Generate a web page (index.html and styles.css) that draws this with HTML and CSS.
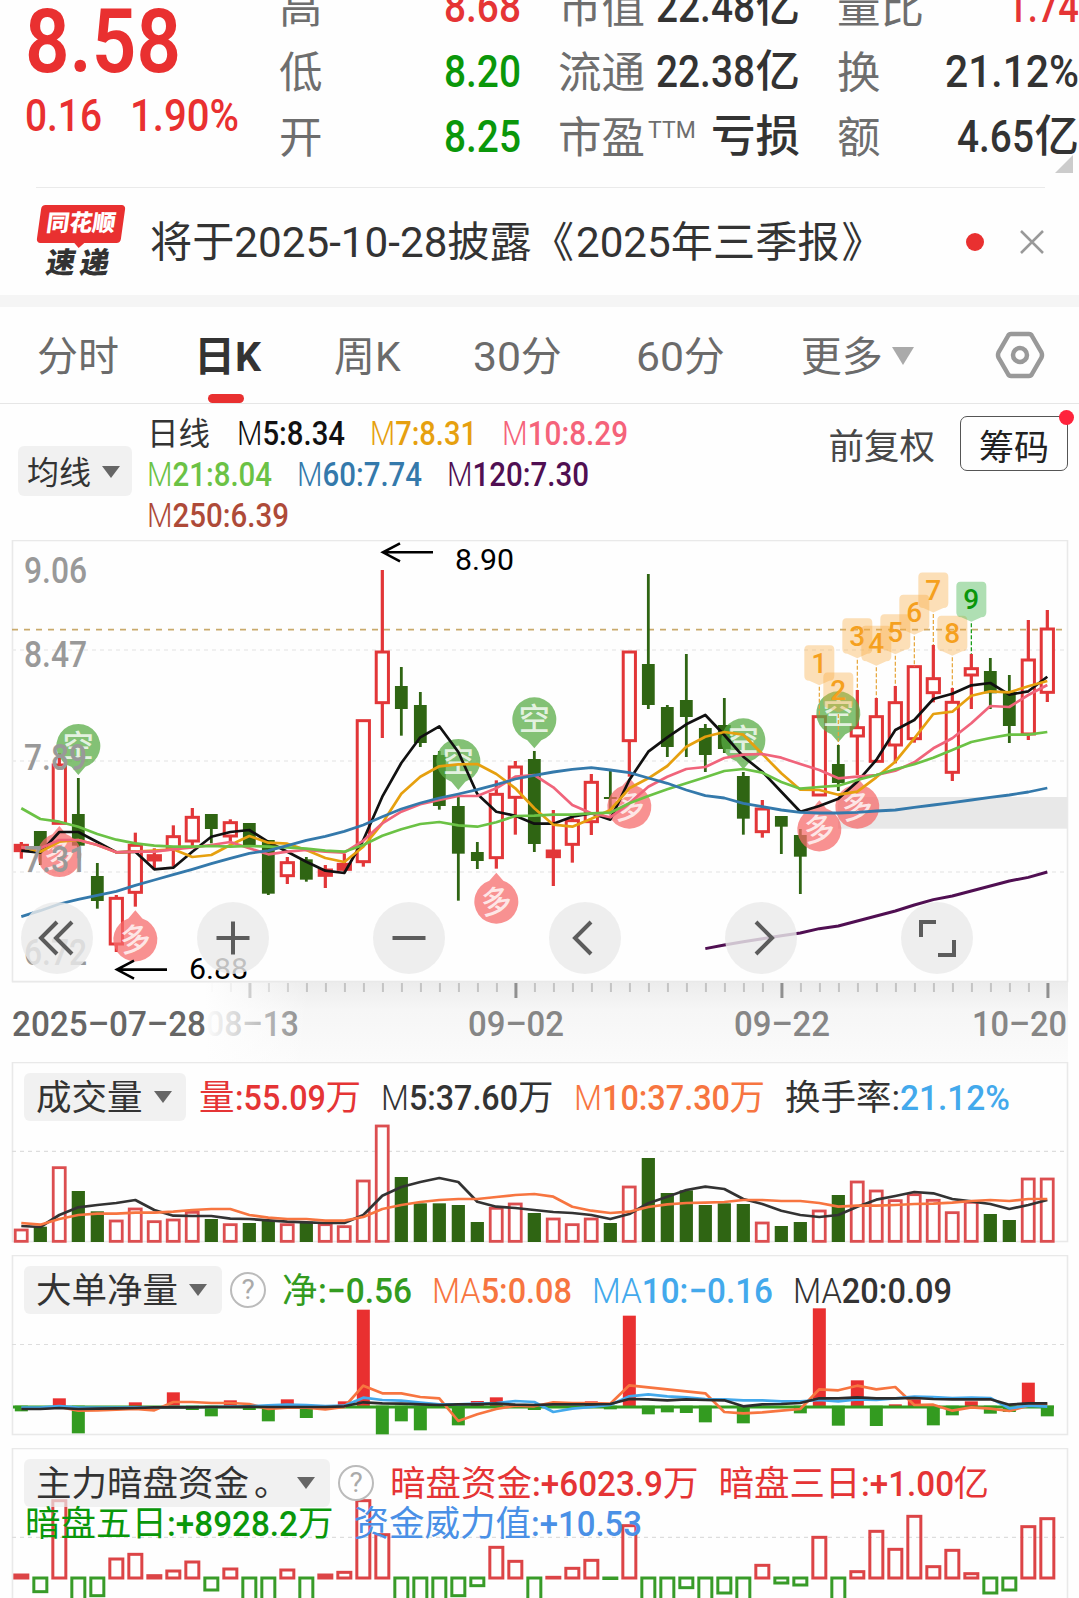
FILE: index.html
```
<!DOCTYPE html>
<html lang="zh-CN">

<head>
    <meta charset="UTF-8" />
    <meta name="viewport" content="width=device-width, initial-scale=1.0" />
    <title>日K</title>
    <link rel="stylesheet" href="styles.css">
</head>

<body>
    <header class="quote">
        <div class="price-box">
            <div class="price"><span class="fit" data-w="156">8.58</span></div>
            <div class="change">
                <span class="fit" data-w="77">0.16</span>
                <span class="fit" data-w="109">1.90%</span>
            </div>
        </div>
        <div class="stats">
            <div class="stat"><span class="name">高</span><b class="up"><span class="fit" data-w="77">8.68</span></b></div>
            <div class="stat"><span class="name">市值</span><b><span class="fit" data-w="99">22.48</span>亿</b></div>
            <div class="stat"><span class="name">量比</span><b class="up"><span class="fit" data-w="72">1.74</span></b></div>
            <div class="stat"><span class="name">低</span><b class="down"><span class="fit" data-w="77">8.20</span></b></div>
            <div class="stat"><span class="name">流通</span><b><span class="fit" data-w="99">22.38</span>亿</b></div>
            <div class="stat"><span class="name">换</span><b><span class="fit" data-w="134">21.12%</span></b></div>
            <div class="stat"><span class="name">开</span><b class="down"><span class="fit" data-w="77">8.25</span></b></div>
            <div class="stat"><span class="name">市盈<sup>TTM</sup></span><b>亏损</b></div>
            <div class="stat"><span class="name">额</span><b><span class="fit" data-w="77">4.65</span>亿</b></div>
        </div>
        <i class="corner"></i>
    </header>

    <section class="news">
        <div class="logo">
            <span class="logo-top">同花顺</span>
            <span class="logo-bottom">速递</span>
        </div>
        <p class="news-text">将于2025-10-28披露<span class="open">《</span>2025年三季报<span class="shut">》</span></p>
        <i class="dot"></i>
        <svg class="close" width="26" height="26" viewBox="0 0 26 26">
            <path d="M2 2L24 24M24 2L2 24" />
        </svg>
    </section>

    <nav class="tabs">
        <a>分时</a>
        <a class="active">日K</a>
        <a>周K</a>
        <a><span class="fit" data-w="48">30</span>分</a>
        <a><span class="fit" data-w="48">60</span>分</a>
        <a class="more">更多<i class="arrow"></i></a>
        <svg class="setting" width="50" height="50" viewBox="0 0 50 50">
            <path d="M16 4H34Q36 4 37 6L46.500 22.500Q47.500 25 46.500 27.500L37 44Q36 46 34 46H16Q14 46 13 44L3.500 27.500Q2.500 25 3.500 22.500L13 6Q14 4 16 4Z" />
            <circle cx="25" cy="25" r="7" />
        </svg>
    </nav>

    <section class="legend">
        <div class="pill small">均线<i class="arrow"></i></div>
        <div class="averages">
            <div class="line">
                <span class="cn">日线</span>
                <span class="fit black" data-w="108"><i>M</i>5:8.34</span>
                <span class="fit orange" data-w="107"><i>M</i>7:8.31</span>
                <span class="fit pink" data-w="126"><i>M</i>10:8.29</span>
            </div>
            <div class="line">
                <span class="fit green" data-w="125"><i>M</i>21:8.04</span>
                <span class="fit blue" data-w="125"><i>M</i>60:7.74</span>
                <span class="fit purple" data-w="142"><i>M</i>120:7.30</span>
            </div>
            <div class="line">
                <span class="fit brown" data-w="142"><i>M</i>250:6.39</span>
            </div>
        </div>
        <span class="adjust">前复权</span>
        <button class="chips">筹码<i class="badge"></i></button>
    </section>

    <section class="kline">
        <svg id="kline" width="1079" height="522" viewBox="0 0 1079 522"></svg>
        <div class="tools">
            <button><svg viewBox="0 0 72 72"><path d="M36 20L20 36L36 52M51 20L35 36L51 52" /></svg></button>
            <button><svg viewBox="0 0 72 72"><path d="M19.500 36H52.500M36 19.500V52.500" /></svg></button>
            <button><svg viewBox="0 0 72 72"><path d="M19.500 36H52.500" /></svg></button>
            <button><svg viewBox="0 0 72 72"><path d="M42 20L26 36L42 52" /></svg></button>
            <button><svg viewBox="0 0 72 72"><path d="M31 20L47 36L31 52" /></svg></button>
            <button><svg viewBox="0 0 72 72"><path d="M35 20H20V35M53 38V53H37" /></svg></button>
        </div>
    </section>

    <section class="panel volume">
        <svg id="volume" width="1079" height="181" viewBox="0 0 1079 181"></svg>
        <div class="head">
            <div class="pill">成交量<i class="arrow"></i></div>
            <span class="up">量<span class="fit" data-w="91">:55.09</span>万</span>
            <span class="dark"><span class="fit" data-w="137"><i>M</i>5:37.60</span>万</span>
            <span class="coral"><span class="fit" data-w="156"><i>M</i>10:37.30</span>万</span>
            <span class="dark">换手率:<span class="fit sky" data-w="110">21.12%</span></span>
        </div>
    </section>

    <section class="panel net">
        <svg id="net" width="1079" height="181" viewBox="0 0 1079 181"></svg>
        <div class="head">
            <div class="pill">大单净量<i class="arrow"></i></div>
            <i class="help">?</i>
            <span class="leaf">净<span class="fit" data-w="94">:−0.56</span></span>
            <span class="fit coral" data-w="140"><i>MA</i>5:0.08</span>
            <span class="fit sky" data-w="181"><i>MA</i>10:−0.16</span>
            <span class="fit dark" data-w="159"><i>MA</i>20:0.09</span>
        </div>
    </section>

    <section class="panel flow">
        <svg id="flow" width="1079" height="151" viewBox="0 0 1079 151"></svg>
        <div class="head">
            <div class="pill wide"><span>主力暗盘资金<span class="stop">。</span></span><i class="arrow"></i></div>
            <i class="help">?</i>
            <span class="up">暗盘资金<span class="fit" data-w="131">:+6023.9</span>万</span>
            <span class="up">暗盘三日<span class="fit" data-w="93">:+1.00</span>亿</span>
            <div class="second">
                <span class="down">暗盘五日<span class="fit" data-w="131">:+8928.2</span>万</span>
                <span class="azure">资金威力值<span class="fit" data-w="111">:+10.53</span></span>
            </div>
        </div>
    </section>

    <script src="chart.js"></script>
</body>

</html>
```
FILE: styles.css
```
* {
    box-sizing: border-box;
    margin: 0;
    padding: 0;
}

body {
    width: 1079px;
    height: 1598px;
    overflow: hidden;
    background: #fefefe;
    color: #333;
    font-family: Roboto, "Noto Sans CJK SC", sans-serif;
}

i {
    font-style: normal;
}

button {
    font-family: inherit;
    background: none;
    border: none;
}

svg {
    display: block;
}

.fit {
    display: inline-block;
    transform-origin: left center;
    white-space: nowrap;
}

.up { color: #e53435; }
.down { color: #0a970a; }
.dark { color: #333; }
.black { color: #111; }
.orange { color: #e6a00f; }
.pink { color: #f5637a; }
.green { color: #6bc245; }
.blue { color: #3479ab; }
.purple { color: #500f52; }
.brown { color: #ae4a38; }
.coral { color: #f77540; }
.sky { color: #43a9ec; }
.leaf { color: #339b20; }
.azure { color: #4a90e6; }

/* quote header */
.quote {
    position: relative;
    display: flex;
    height: 187px;
    overflow: hidden;
}

.price-box {
    width: 280px;
    padding-left: 25px;
    color: #e93030;
}

.price {
    margin-top: -3px;
    font-size: 89px;
    line-height: 89px;
    font-weight: 600;
}

.change {
    display: flex;
    gap: 28px;
    margin-top: 7px;
    font-size: 45px;
    line-height: 45px;
    font-weight: 500;
}

.stats {
    display: grid;
    grid-template-columns: 242px 242px 242px;
    grid-auto-rows: 65px;
    column-gap: 37px;
    margin-top: -25px;
}

.stat {
    display: flex;
    justify-content: space-between;
    font-size: 45px;
    line-height: 65px;
    white-space: nowrap;
}

.stat b {
    font-weight: 500;
    font-size: 44.500px;
}

.stat .name {
    font-size: 43.500px;
    line-height: 67px;
    color: #6e6e6e;
    font-weight: 400;
}

.stat sup {
    margin-left: 3px;
    font-size: 23px;
    font-weight: 400;
    line-height: 0;
    vertical-align: 15px;
}

.corner {
    position: absolute;
    right: 6px;
    bottom: 14px;
    border-left: 18px solid transparent;
    border-bottom: 18px solid #ccc;
}

/* news bar */
.news {
    display: flex;
    align-items: center;
    height: 108px;
    margin: 0 34px 0 36px;
    border-top: 1px solid #eaeaea;
}

.logo {
    display: flex;
    flex-direction: column;
    align-items: center;
    width: 90px;
    font-weight: 900;
}

.logo-top {
    position: relative;
    width: 84px;
    height: 38px;
    border-radius: 4px;
    background: #e93030;
    color: #fff;
    font-size: 23px;
    line-height: 37px;
    text-align: center;
    transform: skewX(-8deg);
}

.logo-top::after {
    content: "";
    position: absolute;
    left: 37px;
    top: 37px;
    border: 6px solid transparent;
    border-top-color: #e93030;
}

.logo-bottom {
    height: 35px;
    font-size: 29px;
    line-height: 40px;
    letter-spacing: 5px;
    transform: skewX(-10deg);
}

.news-text {
    margin-left: 24px;
    font-size: 42.200px;
    font-weight: 400;
    line-height: 60px;
    padding-top: 2px;
    white-space: nowrap;
}

.news-text .open {
    margin-right: 2px;
}

.news-text .shut {
    margin-left: 2px;
}

.dot {
    width: 18px;
    height: 18px;
    margin-left: auto;
    border-radius: 50%;
    background: #e93030;
}

.close {
    margin-left: 35px;
}

.close path {
    stroke: #999;
    stroke-width: 2.500;
}

/* period tabs */
.tabs {
    display: flex;
    align-items: center;
    height: 109px;
    padding: 0 34px 0 37px;
    border-top: 12px solid #f5f5f5;
    border-bottom: 1px solid #e6e6e6;
    font-size: 41px;
    color: #6b6b6b;
    line-height: 100px;
}

.tabs a {
    position: relative;
    height: 96px;
    margin-right: 74px;
    font-weight: 400;
    white-space: nowrap;
}

.tabs a:first-child {
    margin-right: 75px;
}

.tabs a:nth-child(3) {
    margin-right: 72px;
}

.tabs .active {
    margin-right: 73px;
    color: #333;
    font-weight: 700;
}

.tabs .active::after {
    content: "";
    position: absolute;
    left: 50%;
    bottom: 0;
    width: 36px;
    height: 9px;
    margin-left: -20px;
    border-radius: 5px;
    background: #e93030;
}

.tabs .more {
    display: flex;
    align-items: center;
    height: 100px;
    margin-left: 2px;
    margin-right: 0;
    padding-top: 4px;
}

.arrow {
    border: 9px solid transparent;
    border-top: 12px solid #666;
    border-bottom: none;
}

.more .arrow {
    margin: -2px 0 0 9px;
    border-width: 18px 11px 0;
    border-top-color: #aaa;
}

.setting {
    margin-left: auto;
}

.setting path,
.setting circle {
    fill: none;
    stroke: #999;
    stroke-width: 4.500;
}

/* averages legend */
.legend {
    display: flex;
    height: 136px;
    padding: 9px 11px 0 18px;
}

.pill {
    display: flex;
    align-items: center;
    justify-content: space-between;
    height: 48px;
    padding: 3px 15px 0 12px;
    border-radius: 6px;
    background: rgba(235, 235, 235, 0.7);
    color: #333;
    font-size: 35.500px;
    line-height: 51px;
    font-weight: 400;
    gap: 11px;
    white-space: nowrap;
}

.pill.small {
    width: 114px;
    height: 50px;
    margin-top: 33px;
    padding: 5px 12px 0 9px;
    font-size: 32px;
}

.pill .arrow {
    margin-top: -4px;
}

.pill .stop {
    margin-left: 5px;
}

.averages {
    margin-left: 15px;
    font-size: 33.500px;
    line-height: 41px;
    font-weight: 500;
}

.averages .line {
    display: flex;
    gap: 25px;
}

.averages .cn {
    font-size: 31.500px;
    line-height: 43px;
    height: 41px;
    font-weight: 400;
    margin: 0 2px 0 0;
}

.averages i,
.head span i {
    font-weight: 300;
}

.adjust {
    margin: 6px 25px 0 auto;
    font-size: 35.500px;
    line-height: 57px;
    font-weight: 400;
    color: #484848;
}

.chips {
    position: relative;
    width: 108px;
    height: 55px;
    margin-top: 3px;
    padding-top: 5px;
    border: 1px solid #555;
    border-radius: 7px;
    font-size: 35px;
    line-height: 54px;
    color: #222;
}

.badge {
    position: absolute;
    top: -7px;
    right: -7px;
    width: 15px;
    height: 15px;
    border-radius: 50%;
    background: #ff233c;
}

/* candle chart */
.kline {
    position: relative;
    height: 522px;
}

.tools {
    position: absolute;
    left: 21px;
    top: 362px;
    display: flex;
    gap: 104px;
}

.tools button {
    width: 72px;
    height: 72px;
    border-radius: 50%;
    background: rgba(234, 234, 234, 0.82);
}

.tools path {
    fill: none;
    stroke: #5c5c5c;
    stroke-width: 4;
}

/* indicator panels, header lies over the drawing */
.panel {
    display: grid;
    height: 193px;
}

.panel svg,
.panel .head {
    grid-area: 1 / 1;
}

.head {
    display: flex;
    flex-wrap: wrap;
    align-content: flex-start;
    z-index: 1;
    padding: 11px 12px 0 24px;
    font-size: 35.500px;
    line-height: 51px;
    font-weight: 400;
    white-space: nowrap;
    column-gap: 20px;
}

.head .fit {
    font-weight: 500;
}

.volume .pill {
    width: 162px;
    margin-right: -7px;
}

.net .pill {
    width: 198px;
    margin-right: -12px;
}

.pill.wide {
    width: 306px;
    margin-right: -12px;
    gap: 0;
}

.help {
    width: 36px;
    height: 36px;
    margin: 6px -4px 0 0;
    border: 2px solid #bbb;
    border-radius: 50%;
    color: #aaa;
    font-size: 28px;
    font-weight: 400;
    line-height: 32px;
    text-align: center;
}

.second {
    display: flex;
    gap: 20px;
    width: 100%;
    margin-top: -11px;
    padding-left: 1px;
}

/* svg texts */
.axis {
    fill: #999;
    font-size: 36px;
    font-weight: 500;
}

.date {
    fill: #868686;
    font-size: 35.500px;
    font-weight: 500;
}

.extreme {
    fill: #000;
    font-size: 30px;
}

.pin {
    fill: #fff;
    fill-opacity: 0.8;
    font-size: 31px;
    font-weight: 500;
    text-anchor: middle;
}

.tag {
    font-size: 28px;
    font-weight: 500;
    text-anchor: middle;
}
```
FILE: chart.js
```
// all heights below are in thirds of a pixel
const RED = '#e23638';
const GREEN = '#2f6513';
const X = i => 21.33 + 19 * i;

// squeeze numbers to their column width
document.querySelectorAll('.fit').forEach(el => {
    const natural = el.getBoundingClientRect().width;
    const w = Number(el.dataset.w);
    el.style.transform = `scaleX(${w / natural})`;
    el.style.marginRight = `${w - natural}px`;
});

function rect(x, y, w, h, attrs) {
    return `<rect x="${x.toFixed(2)}" y="${y.toFixed(2)}" width="${w}" height="${Math.max(h, 0.5).toFixed(2)}" ${attrs}/>`;
}

function line(x1, y1, x2, y2, color, width, dash) {
    return `<line x1="${x1}" y1="${y1}" x2="${x2}" y2="${y2}" stroke="${color}" stroke-width="${width}"${dash ? ` stroke-dasharray="${dash}"` : ''}/>`;
}

function curve(values, y, color, width, start = 0) {
    const pts = values.map((v, i) => `${X(i + start).toFixed(1)},${y(v).toFixed(1)}`).join(' ');
    return `<polyline points="${pts}" fill="none" stroke="${color}" stroke-width="${width}" stroke-linejoin="round"/>`;
}

function frame(h) {
    return rect(12.5, 0.5, 1055, h, 'fill="none" stroke="#e9e9e9" stroke-width="1.6"');
}

/* ---------- candles ---------- */
const candles = [
    ['r', 936, 946, 962, 986], ['g', 903, 903, 950, 1005], ['r', 670, 705, 880, 880], ['g', 744, 852, 947, 985],
    ['g', 999, 1038, 1113, 1136], ['r', 1095, 1105, 1242, 1266], ['r', 908, 946, 1087, 1130], ['r', 955, 977, 990, 1020],
    ['r', 886, 920, 955, 1010], ['r', 834, 862, 933, 950], ['g', 852, 852, 897, 940], ['r', 868, 878, 918, 940],
    ['g', 879, 879, 948, 948], ['g', 930, 930, 1091, 1095], ['r', 981, 998, 1037, 1062], ['g', 981, 988, 1049, 1055],
    ['r', 1005, 1020, 1036, 1074], ['r', 971, 1003, 1018, 1025], ['r', 572, 572, 995, 1010], ['r', 120, 366, 518, 624],
    ['g', 411, 468, 537, 617], ['g', 486, 525, 639, 651], ['g', 663, 675, 828, 839], ['g', 800, 828, 971, 1112],
    ['g', 936, 966, 993, 1017], ['r', 751, 793, 983, 1016], ['r', 693, 711, 802, 914], ['g', 663, 687, 942, 966],
    ['r', 840, 963, 980, 1068], ['r', 862, 872, 943, 998], ['r', 732, 757, 875, 915], ['g', 723, 801, 807, 845],
    ['r', 366, 366, 632, 740], ['g', 132, 402, 525, 537], ['g', 525, 531, 651, 681], ['g', 372, 510, 561, 681],
    ['g', 582, 594, 675, 726], ['g', 504, 585, 657, 669], ['g', 726, 738, 866, 914], ['r', 810, 837, 905, 923],
    ['g', 858, 858, 890, 972], ['g', 897, 915, 980, 1092], ['r', 560, 560, 795, 795], ['g', 645, 702, 759, 783],
    ['r', 480, 593, 618, 735], ['r', 504, 560, 694, 694], ['r', 468, 518, 645, 700], ['r', 410, 410, 626, 638],
    ['r', 345, 446, 488, 517], ['r', 474, 517, 727, 753], ['r', 372, 416, 435, 537], ['g', 384, 423, 490, 537],
    ['g', 435, 486, 588, 639], ['r', 270, 390, 612, 630], ['r', 240, 297, 487, 516]
];
const ma5 = [962, 968, 906, 906, 936, 967, 965, 1018, 1013, 965, 920, 906, 900, 936, 965, 995, 1022, 1029, 930, 800, 699, 622, 589, 666, 792, 845, 857, 881, 881, 860, 850, 869, 750, 665, 622, 583, 555, 615, 680, 725, 785, 845, 828, 806, 755, 690, 600, 570, 507, 491, 466, 459, 494, 484, 440];
const ma7 = [950, 965, 935, 930, 945, 967, 965, 962, 958, 981, 975, 945, 918, 938, 941, 960, 984, 996, 950, 880, 791, 740, 709, 703, 702, 732, 775, 835, 884, 890, 866, 840, 775, 745, 708, 650, 620, 606, 614, 672, 730, 779, 780, 794, 785, 742, 695, 625, 552, 545, 497, 484, 487, 469, 453];
const ma10 = [952, 955, 930, 930, 945, 967, 965, 965, 958, 952, 945, 936, 955, 973, 965, 960, 965, 968, 932, 880, 845, 823, 810, 798, 798, 775, 740, 735, 772, 825, 850, 862, 820, 770, 740, 717, 711, 684, 674, 672, 683, 702, 720, 745, 740, 735, 722, 697, 655, 625, 580, 528, 531, 495, 465];
const ma21 = [835, 867, 875, 890, 912, 929, 940, 947, 950, 950, 948, 950, 948, 950, 952, 956, 962, 965, 945, 917, 898, 882, 876, 886, 890, 877, 858, 857, 854, 854, 850, 848, 820, 798, 778, 760, 742, 723, 717, 728, 756, 776, 771, 767, 750, 735, 718, 703, 683, 660, 636, 624, 614, 614, 606];
const ma60 = [1160, 1142, 1122, 1108, 1096, 1084, 1066, 1050, 1034, 1018, 1001, 985, 970, 962, 947, 931, 919, 904, 885, 860, 837, 819, 804, 792, 779, 764, 747, 736, 726, 718, 713, 720, 728, 744, 760, 780, 797, 804, 820, 830, 840, 847, 849, 849, 847, 843, 840, 832, 825, 818, 810, 802, 795, 786, 774];
const ma120 = [1256, 1245, 1235, 1226, 1217, 1209, 1196, 1188, 1173, 1158, 1143, 1125, 1109, 1098, 1083, 1068, 1053, 1042, 1026];
const shorts = [[3, 648], [23, 693], [27, 568], [38, 631], [43, 550]];
const longs = [[2, 975], [6, 1228], [25, 1115], [32, 830], [42, 898], [44, 830]];
const tags = [398, 480, 317, 340, 305, 247, 180, 310, 208];

function drawCandle([kind, hi, top, bottom, lo], i, y) {
    const x = X(i);
    const color = kind === 'r' ? RED : GREEN;
    if (kind === 'g') {
        return rect(x - 1.4, y(hi), 2.8, (lo - hi) / 3, `fill="${color}"`) +
            rect(x - 6.4, y(top), 12.8, (bottom - top) / 3, `fill="${color}"`);
    }
    let s = '';
    if (hi < top) s += rect(x - 1.6, y(hi), 3.2, (top - hi) / 3, `fill="${color}"`);
    if (lo > bottom) s += rect(x - 1.6, y(bottom), 3.2, (lo - bottom) / 3, `fill="${color}"`);
    return s + rect(x - 6.1, y(top), 12.2, (bottom - top) / 3, `fill="${bottom - top < 18 ? color : '#fff'}" stroke="${color}" stroke-width="3"`);
}

function drawPin(i, cy, y, up) {
    const x = X(i);
    const c = y(cy);
    const d = up ? -1 : 1;
    const color = up ? '#f56a6a' : '#58ab45';
    const r = `A22 22 0 1 ${up ? 0 : 1}`;
    return `<path d="M${x - 7} ${c + d * 20.8} ${r} ${x + 7} ${c + d * 20.8} L${x} ${c + d * 29}Z" fill="${color}" fill-opacity="0.74"/>` +
        `<text class="pin" x="${x}" y="${c + 11}" transform="rotate(${up ? -8 : 0} ${x} ${c})">${up ? '多' : '空'}</text>`;
}

function drawTag(cy, n, y) {
    const i = 42 + n;
    const x = X(i);
    const c = y(cy);
    const last = n === 8;
    const color = last ? '#0a970a' : '#f5a01e';
    return line(x, c + 24, x, y(candles[i][1]), last ? '#0a970a' : '#e6a437', 1.2, '4 2') +
        `<path d="M${x - 11} ${c - 17.5}H${x + 11}Q${x + 15} ${c - 17.5} ${x + 15} ${c - 13}V${c + 13}Q${x + 15} ${c + 18} ${x + 10} ${c + 18}L${x} ${c + 22.5}L${x - 10} ${c + 18}Q${x - 15} ${c + 18} ${x - 15} ${c + 13}V${c - 13}Q${x - 15} ${c - 17.5} ${x - 11} ${c - 17.5}Z" fill="${last ? '#4fbb58' : '#f9a83a'}" fill-opacity="${last ? 0.45 : 0.36}"/>` +
        `<text class="tag" x="${x}" y="${c + 10}" fill="${color}">${n + 1}</text>`;
}

function text(cls, x, y, str, w, extra = '') {
    return `<text class="${cls}" x="${x}" y="${y}" textLength="${w}" lengthAdjust="spacingAndGlyphs" ${extra}>${str}</text>`;
}

function arrow(x, y) {
    return `<path d="M${x + 51} ${y}H${x + 1}M${x + 18} ${y - 9}L${x + 1} ${y}L${x + 18} ${y + 9}" fill="none" stroke="#000" stroke-width="2.6"/>`;
}

function drawKline() {
    const y = v => (v - 30) / 3;
    let s = `<defs>
        <linearGradient id="down" x2="0" y2="1"><stop offset="0" stop-color="#ececec"/><stop offset="0.35" stop-color="#f6f6f6"/><stop offset="1" stop-color="#fbfbfb"/></linearGradient>
        <linearGradient id="veil"><stop offset="0" stop-color="#fefefe"/><stop offset="0.66" stop-color="#fefefe"/><stop offset="1" stop-color="#fefefe" stop-opacity="0"/></linearGradient>
    </defs>`;
    s += rect(12, 442, 1056, 80, 'fill="url(#down)"');
    for (let i = 10; i < 55; i++) {
        const major = i === 12 || i === 26 || i === 40 || i === 54;
        s += line(X(i) + 0.6, 443, X(i) + 0.6, major ? 458 : 452, major ? '#909090' : '#c4c4c4', major ? 3 : 2);
    }
    s += text('date', 206, 496, '08–13', 93);
    s += rect(0, 442.5, 310, 79.5, 'fill="url(#veil)"');
    s += text('date', 12, 496, '2025–07–28', 194, 'style="fill:#666"');
    s += text('date', 468, 496, '09–02', 96);
    s += text('date', 734, 496, '09–22', 96);
    s += text('date', 972, 496, '10–20', 95);

    s += frame(441);
    [360, 693, 1026].forEach(v => { s += line(12, y(v), 1067, y(v), '#ebebeb', 1.6, '4 4'); });
    s += rect(838, 257, 229, 31.7, 'fill="#e8e8e8"');
    s += line(12, 89.7, 1062, 89.7, '#c9aa6c', 1.8, '6 6');

    candles.forEach((c, i) => { s += drawCandle(c, i, y); });
    shorts.forEach(([i, cy]) => { s += drawPin(i, cy, y, false); });
    longs.forEach(([i, cy]) => { s += drawPin(i, cy, y, true); });
    s += curve(ma5, y, '#111', 2.7);
    s += curve(ma7, y, '#e6a00f', 2.7);
    s += curve(ma10, y, '#f0647b', 2.7);
    s += curve(ma21, y, '#6bc245', 2.7);
    s += curve(ma60, y, '#3479ab', 2.8);
    s += curve(ma120, y, '#500f52', 2.9, 36);
    tags.forEach((cy, n) => { s += drawTag(cy, n, y); });

    ['9.06', '8.47', '7.89', '7.31', '6.72'].forEach((p, i) => {
        s += text('axis', 24, [42.5, 127, 229.5, 331.5, 425][i], p, 63);
    });
    s += arrow(382, 12.3) + text('extreme', 455, 30, '8.90', 59);
    s += arrow(116, 429.6) + text('extreme', 189, 439, '6.88', 59);
    document.getElementById('kline').innerHTML = s;
}

/* ---------- volume ---------- */
const volumes = 'r540 g530 r353 g423 g484 r513 r477 r515 r510 r487 g507 r524 g519 g513 r524 g515 r524 r530 r393 r228 g381 g460 g460 g465 g516 r475 r462 g489 r507 r524 r507 g519 r411 g324 g429 g421 g465 g460 g462 r519 g528 g516 r483 g435 r396 r423 r452 r434 r451 r488 r457 g492 g510 r387 r387'.split(' ');
const vol5 = [528, 531, 495, 472, 465, 459, 450, 480, 497, 498, 498, 506, 507, 511, 515, 517, 519, 519, 495, 437, 411, 396, 384, 396, 455, 470, 474, 480, 486, 489, 495, 507, 492, 460, 440, 420, 410, 417, 447, 462, 482, 495, 501, 495, 470, 449, 438, 426, 430, 447, 454, 462, 477, 465, 450];
const vol10 = [519, 524, 507, 495, 491, 491, 488, 488, 485, 480, 477, 477, 495, 503, 507, 507, 512, 512, 501, 477, 465, 456, 450, 447, 447, 441, 435, 432, 440, 470, 482, 489, 485, 471, 463, 459, 458, 456, 450, 450, 453, 453, 459, 470, 467, 467, 465, 462, 461, 458, 453, 450, 453, 447, 447];

function drawVolume() {
    const y = v => (v - 36) / 3;
    let s = frame(179) + line(12, 89.3, 1065, 89.3, '#ddd', 1.2, '4 4');
    volumes.forEach((v, i) => {
        const top = Number(v.slice(1));
        s += v[0] === 'g'
            ? rect(X(i) - 6.6, y(top), 13.2, (576 - top) / 3, `fill="${GREEN}"`)
            : rect(X(i) - 6.1, y(top), 12, (574 - top) / 3, 'fill="#fff" stroke="#dc4e50" stroke-width="2.8"');
    });
    s += curve(vol5, y, '#333', 2.7) + curve(vol10, y, '#f77540', 2.7);
    document.getElementById('volume').innerHTML = s;
}

/* ---------- net big orders ---------- */
const nets = [333, 320, 294, 399, 320, 320, 306, 320, 276, 329, 348, 300, 329, 363, 297, 353, 320, 303, 28, 402, 363, 390, 320, 375, 302, 291, 320, 329, 320, 320, 303, 327, 46, 342, 336, 338, 366, 320, 369, 320, 320, 339, 24, 376, 240, 377, 312, 297, 375, 345, 303, 340, 335, 247, 348];
const net5 = [325, 325, 320, 331, 330, 328, 326, 330, 305, 305, 308, 308, 311, 326, 322, 322, 327, 320, 256, 279, 279, 290, 294, 362, 342, 326, 316, 318, 306, 308, 308, 310, 255, 261, 267, 273, 279, 335, 339, 336, 331, 326, 267, 270, 256, 267, 260, 314, 313, 331, 321, 325, 332, 316, 310];
const net10 = [322, 322, 317, 322, 322, 322, 321, 321, 320, 320, 320, 319, 318, 315, 313, 314, 317, 316, 292, 299, 301, 307, 312, 312, 310, 308, 302, 305, 335, 325, 320, 314, 288, 282, 288, 291, 296, 297, 300, 300, 303, 303, 299, 303, 297, 299, 294, 289, 290, 293, 292, 293, 324, 316, 319];
const net20 = [326, 326, 323, 326, 325, 324, 323, 321, 321, 321, 320, 320, 319, 320, 320, 320, 320, 318, 306, 309, 310, 312, 314, 312, 312, 310, 313, 314, 312, 312, 312, 311, 296, 297, 300, 297, 299, 300, 318, 312, 311, 308, 294, 294, 291, 294, 294, 293, 296, 297, 297, 297, 313, 309, 309];

function drawNet() {
    const y = v => (v + 136) / 3;
    let s = frame(179) + line(12, 89.5, 1065, 89.5, '#ddd', 1.2, '4 4');
    nets.forEach((v, i) => {
        if (v < 320) s += rect(X(i) - 6.5, y(v), 13, (318 - v) / 3, 'fill="#e93030"');
        if (v > 320) s += rect(X(i) - 6.5, y(316), 13, (v - 316) / 3, 'fill="#339b20"');
    });
    s += line(13, 152, 1054, 152, '#339b20', 2.8);
    s += curve(net5, y, '#f77540', 2.7) + curve(net10, y, '#43a9ec', 2.7) + curve(net20, y, '#2c2c2c', 2.7);
    document.getElementById('net').innerHTML = s;
}

/* ---------- hidden money flow ---------- */
const flows = [820, 880, 597, 910, 892, 772, 758, 822, 808, 781, 875, 802, 910, 910, 805, 910, 820, 812, 597, 699, 910, 910, 910, 892, 862, 737, 779, 910, 827, 800, 776, 840, 672, 910, 910, 868, 910, 884, 910, 791, 854, 860, 707, 910, 810, 689, 743, 644, 795, 746, 816, 884, 875, 675, 651];

function drawFlow() {
    const y = v => (v - 444) / 3;
    let s = frame(200) + line(12, 89.3, 1065, 89.3, '#ddd', 1.2, '4 4');
    flows.forEach((v, i) => {
        const up = v < 833;
        const top = up ? v + 5 : 834;
        const bottom = up ? 834 : v - 5;
        s += rect(X(i) - 6.5, y(top), 13, (bottom - top) / 3, `fill="${bottom - top < 13 ? (up ? '#e23638' : '#389b28') : 'none'}" stroke="${up ? '#dc4446' : '#389b28'}" stroke-width="3"`);
    });
    document.getElementById('flow').innerHTML = s;
}

drawKline();
drawVolume();
drawNet();
drawFlow();
```
